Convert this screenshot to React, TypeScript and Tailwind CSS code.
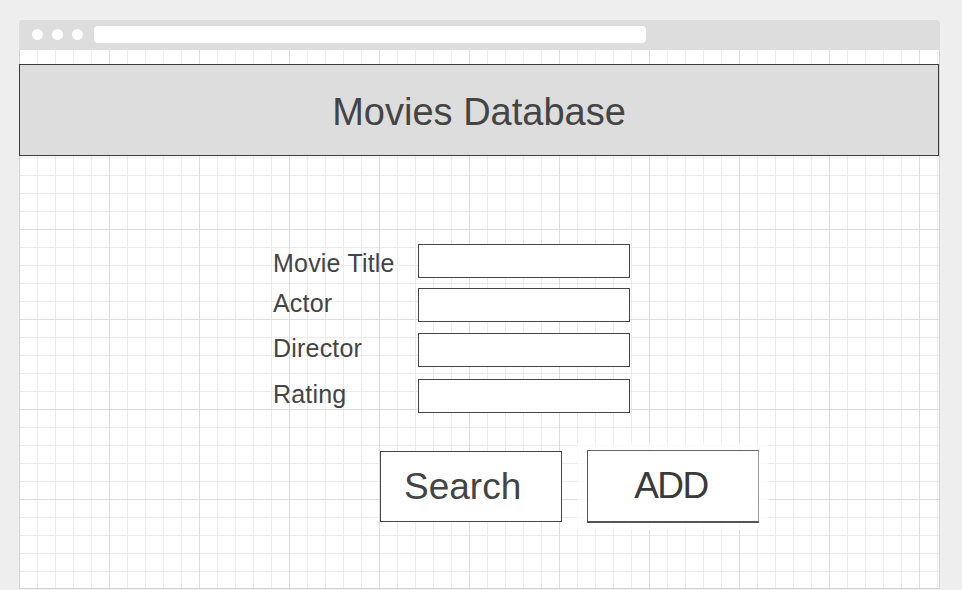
import React from 'react';

const fields = [
  { label: 'Movie Title', rowClass: 'mt-0', labelClass: 'mt-[2px]' },
  { label: 'Actor', rowClass: 'mt-[10px]', labelClass: '-mt-[2px]' },
  { label: 'Director', rowClass: 'mt-[11px]', labelClass: '-mt-[2px]' },
  { label: 'Rating', rowClass: 'mt-[12px]', labelClass: '-mt-[2px]' },
];

export default function App() {
  return (
    <div className="w-[962px] h-[590px] overflow-hidden bg-[#eeeeee] font-['Liberation_Sans',Arial,sans-serif] text-[#444]">
      <div className="ml-[19px] pt-[20px] w-[921px]">
        {/* browser chrome */}
        <div className="h-[29px] rounded-t-[4px] bg-[#dddddd] flex items-center pl-[13px] pr-[294px]">
          <div className="flex gap-[9px]">
            <span className="w-[11px] h-[11px] rounded-full bg-white" />
            <span className="w-[11px] h-[11px] rounded-full bg-white" />
            <span className="w-[11px] h-[11px] rounded-full bg-white" />
          </div>
          <div className="ml-[11px] flex-1 h-[17px] rounded-[4px] bg-white" />
        </div>

        {/* page canvas */}
        <div className="h-[540px] border-x border-b border-[#d2d2d2] bg-white [background-image:linear-gradient(to_right,#dddddd_1px,transparent_1px),linear-gradient(to_bottom,#dddddd_1px,transparent_1px),linear-gradient(to_right,#ececec_1px,transparent_1px),linear-gradient(to_bottom,#ececec_1px,transparent_1px)] [background-size:90px_90px,90px_90px,18px_18px,18px_18px] [background-position:-1px_0]">
          <div className="pt-[15px]">
            <div className="-ml-px h-[92px] border border-[#3c3c3c] bg-[#dddddd] flex items-center justify-center">
              <h1 className="mt-[3px] text-[38px] leading-[44px] text-[#444]">Movies Database</h1>
            </div>
          </div>

          <div className="ml-[253px] mt-[88px]">
            {fields.map((f) => (
              <div key={f.label} className={`h-[34px] flex items-start ${f.rowClass}`}>
                <label className={`w-[145px] text-[25px] tracking-[0.2px] leading-[34px] ${f.labelClass}`}>{f.label}</label>
                <input
                  type="text"
                  className="w-[212px] h-[34px] border border-[#444] bg-white outline-none"
                />
              </div>
            ))}
          </div>

          <div className="ml-[360px] mt-[30px] flex items-start">
            <button className="mt-[8px] w-[182px] h-[71px] border border-[#444] bg-white text-left pl-[23px] text-[37px] leading-[69px] text-[#444]">
              Search
            </button>
            <div className="ml-[15px] pl-[10px] pr-[9px] pt-[7px] pb-[7px] bg-white/80">
              <button className="w-[172px] h-[73px] border-t border-l border-t-[#666] border-l-[#555] border-r border-r-[#999] border-b-2 border-b-[#555] bg-white text-center pr-[4px] text-[37px] tracking-[-1.5px] leading-[70px] text-[#3a3a3a]">
                ADD
              </button>
            </div>
          </div>
        </div>
      </div>
    </div>
  );
}
